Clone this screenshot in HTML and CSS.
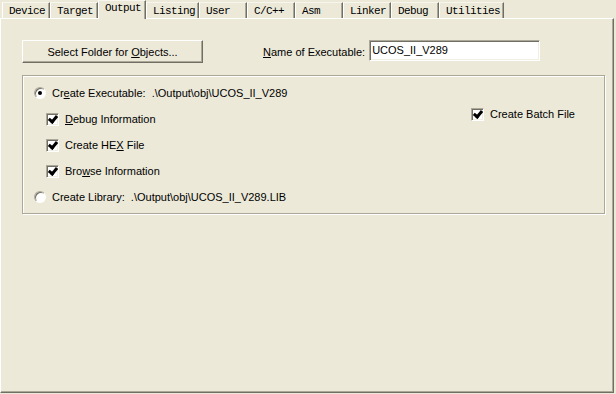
FILE: index.html
```html
<!DOCTYPE html>
<html lang="en">

<head>
  <meta charset="UTF-8" />
  <title>Options for Target - Output</title>
  <link rel="stylesheet" href="styles.css">
</head>

<body>

  <!-- Tab strip -->
  <div class="tabs">
    <div class="tab">Device</div>
    <div class="tab">Target</div>
    <div class="tab active">Output</div>
    <div class="tab">Listing</div>
    <div class="tab">User</div>
    <div class="tab">C/C++</div>
    <div class="tab">Asm</div>
    <div class="tab">Linker</div>
    <div class="tab">Debug</div>
    <div class="tab">Utilities</div>
  </div>

  <!-- Output page -->
  <div class="panel">
    <div class="top-row">
      <button class="btn">Select Folder for <u>O</u>bjects...</button>
      <label class="name-label"><u>N</u>ame of Executable:</label>
      <div class="textbox">UCOS_II_V289</div>
    </div>

    <div class="group">
      <div class="opt">
        <span class="radio on"></span>
        <span>Cr<u>e</u>ate Executable:&nbsp; .\Output\obj\UCOS_II_V289</span>
      </div>

      <div class="opts-row">
        <div class="opts-left">
          <div class="opt">
            <span class="check"></span>
            <span><u>D</u>ebug Information</span>
          </div>
          <div class="opt">
            <span class="check"></span>
            <span>Create HE<u>X</u> File</span>
          </div>
          <div class="opt">
            <span class="check"></span>
            <span>Bro<u>w</u>se Information</span>
          </div>
        </div>
        <div class="opt batch">
          <span class="check"></span>
          <span>Create Batch File</span>
        </div>
      </div>

      <div class="opt">
        <span class="radio"></span>
        <span>Create Library:&nbsp; .\Output\obj\UCOS_II_V289.LIB</span>
      </div>
    </div>
  </div>

</body>

</html>
```

FILE: styles.css
```css
html,
body {
  height: 100%;
}

body {
  margin: 0;
  background: #ece9d8;
  font-family: 'Liberation Sans', Arial, sans-serif;
  font-size: 11px;
  color: #000;
  display: flex;
  flex-direction: column;
  overflow: hidden;
}

u {
  text-decoration: underline;
  text-underline-offset: 1px;
}

/* tabs */
.tabs {
  display: flex;
  height: 18px;
  padding-left: 2px;
  align-items: flex-end;
}

.tab {
  box-sizing: border-box;
  min-width: 48px;
  flex-shrink: 0;
  height: 16px;
  padding: 2px 3px 0 6px;
  font-family: 'Liberation Mono', 'DejaVu Sans Mono', monospace;
  font-size: 11px;
  letter-spacing: -0.6px;
  line-height: 13px;
  border-top: 1px solid #f6f5ee;
  border-left: 1px solid #fff;
  border-right: 1px solid #716f64;
  box-shadow: inset -1px 0 #aca899;
  white-space: nowrap;
}

.tab.active {
  height: 19px;
  margin-bottom: -1px;
  padding-top: 1px;
  position: relative;
  z-index: 1;
  background: #ece9d8;
}

/* page */
.panel {
  flex: 1;
  width: 614px;
  box-sizing: border-box;
  border-top: 1px solid #fff;
  border-left: 1px solid #fff;
  border-right: 1px solid #716f64;
  border-bottom: 1px solid #716f64;
  box-shadow: inset -1px -1px #aca899;
  margin-bottom: 1px;
  padding: 21px 0 0 21px;
}

.top-row {
  display: flex;
  align-items: center;
  height: 23px;
}

.btn {
  box-sizing: border-box;
  width: 181px;
  height: 23px;
  margin: 0;
  padding: 0;
  background: #ece9d8;
  font: inherit;
  color: #000;
  border: 1px solid;
  border-color: #fff #716f64 #716f64 #fff;
  box-shadow: inset -1px -1px #aca899;
}

.name-label {
  margin-left: 60px;
}

.textbox {
  box-sizing: border-box;
  width: 171px;
  height: 21px;
  margin-left: 4px;
  margin-top: -2px;
  padding: 3px 0 0 2px;
  background: #fff;
  border: 1px solid;
  border-color: #aca899 #fff #fff #aca899;
  box-shadow: inset 1px 1px #716f64, inset -1px -1px #f1efe2;
}

.group {
  box-sizing: border-box;
  width: 583px;
  height: 139px;
  margin-top: 12px;
  border: 1px solid #aca899;
  box-shadow: inset 1px 1px #fff, 1px 1px #fff;
  padding: 4px 0 0 11px;
}

.opt {
  display: flex;
  align-items: center;
  gap: 6px;
  height: 26px;
}

.opts-row {
  display: flex;
}

.opts-left {
  width: 425px;
  padding-left: 12px;
}

.opt.batch {
  height: 16px;
}

/* controls */
.radio {
  width: 12px;
  height: 12px;
  border-radius: 50%;
  box-sizing: border-box;
  background: #fff;
  border: 1px solid;
  border-color: #aca899 #fff #fff #aca899;
  box-shadow: inset 1px 1px #716f64;
  position: relative;
}

.radio.on::after {
  content: '';
  position: absolute;
  left: 3px;
  top: 3px;
  width: 4px;
  height: 4px;
  border-radius: 50%;
  background: #000;
}

.check {
  width: 13px;
  height: 13px;
  box-sizing: border-box;
  background: #fff;
  border: 1px solid;
  border-color: #aca899 #fff #fff #aca899;
  box-shadow: inset 1px 1px #716f64, inset -1px -1px #f1efe2;
  position: relative;
}

.check::after {
  content: '';
  position: absolute;
  left: 3px;
  top: 0px;
  width: 3px;
  height: 6px;
  border: solid #000;
  border-width: 0 3px 3px 0;
  transform: rotate(40deg);
}
```
